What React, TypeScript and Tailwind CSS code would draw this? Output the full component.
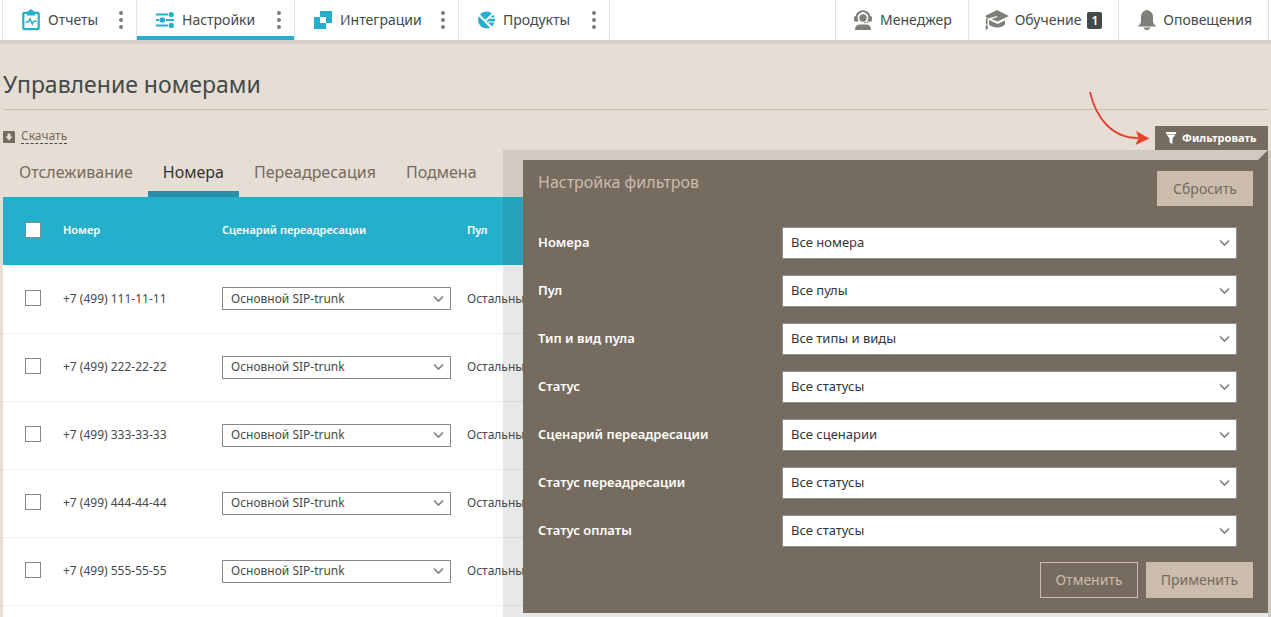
import type { ReactNode } from 'react';
import clsx from 'clsx';

function ReportsIcon() {
  return (
    <svg width="18" height="22" viewBox="0 0 18 22" className="shrink-0">
      <rect x="1.3" y="3.8" width="15.4" height="16.4" rx="1" fill="#fff" stroke="#24b0cd" strokeWidth="2.2" />
      <path d="M5 6.5V3.2Q5 2.2 6 2.2H6.8Q7.2 0.3 9 0.3T11.2 2.2H12Q13 2.2 13 3.2V6.5Z" fill="#24b0cd" />
      <path d="M3.5 13H6.3L8 10L10.3 15L11.7 12.3H14.5" fill="none" stroke="#24b0cd" strokeWidth="1.5" />
    </svg>
  );
}

function SettingsIcon() {
  return (
    <svg width="18" height="16" viewBox="0 0 18 16" className="shrink-0" fill="#24b0cd">
      <path d="M0 1.5H12V3.5H0ZM0 7H3V9H0ZM10 7H18V9H10ZM0 12.5H12V14.5H0Z" />
      <circle cx="15.3" cy="2.6" r="2.6" />
      <circle cx="6.3" cy="8" r="2.8" />
      <circle cx="15.3" cy="13.4" r="2.6" />
    </svg>
  );
}

function IntegrationsIcon() {
  return (
    <svg width="18" height="18" viewBox="0 0 18 18" className="shrink-0" fill="#24b0cd">
      <path d="M6 0H18V12H12V6H6Z" />
      <path d="M0 6H6V12H12V18H0Z" />
    </svg>
  );
}

function ProductsIcon() {
  return (
    <svg width="17" height="18" viewBox="0 0 17 18" className="shrink-0">
      <circle cx="8.5" cy="9" r="8.5" fill="#24b0cd" />
      <path d="M0 3L14.5 17.5" stroke="#fff" strokeWidth="2.2" />
      <path d="M7.5 10L15.5 2" stroke="#fff" strokeWidth="1.8" />
      <path d="M10 7.2H17M10 11H17" stroke="#fff" strokeWidth="1.2" />
    </svg>
  );
}

function ManagerIcon() {
  return (
    <svg width="18" height="20" viewBox="0 0 18 20" className="shrink-0" fill="#7d7f79">
      <path d="M3.7 11.5A6.5 6.5 0 1 1 14.3 11.5" fill="none" stroke="#7d7f79" strokeWidth="2.2" />
      <rect x="0" y="6" width="3.6" height="5.5" rx="1.5" />
      <rect x="14.4" y="6" width="3.6" height="5.5" rx="1.5" />
      <circle cx="9" cy="8" r="3.7" />
      <path d="M14.5 11.5Q12.5 13 10 12.8" fill="none" stroke="#7d7f79" strokeWidth="1" />
      <path d="M1 20Q1 14.5 6 14.5H12Q17 14.5 17 20Z" />
    </svg>
  );
}

function TrainingIcon() {
  return (
    <svg width="24" height="20" viewBox="0 0 24 20" className="shrink-0" fill="#7d7f79">
      <path d="M12 0L24 6L12.5 11.5L6.5 9L12.5 7L12 6L3 8.5L0 6Z" />
      <path d="M4 10L12.5 14L20 10.5V14.5Q17 17.5 12.5 17.5Q7 17.5 4 14.5Z" />
      <path d="M1 8L2.6 8.5V14.5H1ZM0.6 15.5H2.8V19L0.6 20Z" />
    </svg>
  );
}

function BellIcon() {
  return (
    <svg width="20" height="20" viewBox="0 0 20 20" className="shrink-0" fill="#7d7f79">
      <path d="M10 0Q12 0 12.3 1Q16 2.3 16 7V11.5Q16.2 14.5 20 16.5H0Q3.8 14.5 4 11.5V7Q4 2.3 7.7 1Q8 0 10 0Z" />
      <path d="M6.5 17.5H13.5Q12.5 20 10 20T6.5 17.5Z" />
    </svg>
  );
}

const menu = [
  { label: 'Отчеты', icon: <ReportsIcon />, width: 'w-[134px]' },
  { label: 'Настройки', icon: <SettingsIcon />, width: 'w-[158px]', active: true },
  { label: 'Интеграции', icon: <IntegrationsIcon />, width: 'w-[164px]' },
  { label: 'Продукты', icon: <ProductsIcon />, width: 'w-[151px]' },
];

const tabs = ['Отслеживание', 'Номера', 'Переадресация', 'Подмена'];

const numbers = [
  '+7 (499) 111-11-11',
  '+7 (499) 222-22-22',
  '+7 (499) 333-33-33',
  '+7 (499) 444-44-44',
  '+7 (499) 555-55-55',
];

const filters = [
  { id: 'numbers', label: 'Номера', value: 'Все номера' },
  { id: 'pool', label: 'Пул', value: 'Все пулы' },
  { id: 'pool-type', label: 'Тип и вид пула', value: 'Все типы и виды' },
  { id: 'status', label: 'Статус', value: 'Все статусы' },
  { id: 'scenario', label: 'Сценарий переадресации', value: 'Все сценарии' },
  { id: 'forward-status', label: 'Статус переадресации', value: 'Все статусы' },
  { id: 'payment-status', label: 'Статус оплаты', value: 'Все статусы' },
];

function Chevron() {
  return (
    <svg
      width="11"
      height="8"
      viewBox="0 0 11 8"
      className="pointer-events-none absolute top-1/2 right-[7px] -translate-y-1/2"
    >
      <path d="M1 1.5L5.5 6L10 1.5" fill="none" stroke="#7d7f80" strokeWidth="1.7" />
    </svg>
  );
}

function Checkbox({ label }: { label: string }) {
  return (
    <input
      type="checkbox"
      aria-label={label}
      className="block h-4 w-4 appearance-none border border-[#85898a] bg-white"
    />
  );
}

function MenuLink({ icon, className, children }: { icon: ReactNode; className: string; children: ReactNode }) {
  return (
    <a href="#" className={clsx('flex h-full items-center border-l border-[#e3e3e3] pr-4', className)}>
      {icon}
      {children}
    </a>
  );
}

function FilterPanel() {
  return (
    <div className="absolute top-[150px] right-0 bottom-0 left-[503px] bg-[#434a4b]/13 pt-[10px] pr-[3px] pl-5">
      <svg width="10" height="10" viewBox="0 0 10 10" className="absolute top-0 right-[3px]">
        <path d="M0 10L10 0V10Z" fill="#756b5e" />
      </svg>
      <form className="bg-[#756b5e] p-[15px] pt-[11px]">
        <div className="flex items-start justify-between">
          <h2 className="text-base leading-[22px] text-[#cbbcab]">Настройка фильтров</h2>
          <button type="reset" className="h-[35px] w-24 bg-[#cbbcab] text-sm text-[#756b5e]">
            Сбросить
          </button>
        </div>
        <div className="mt-[21px] flex flex-col gap-4 pr-4">
          {filters.map(({ id, label, value }) => (
            <div key={id} className="flex items-center">
              <label htmlFor={id} className="w-[244px] shrink-0 text-[13px] font-semibold text-white">
                {label}
              </label>
              <div className="relative flex-1">
                <select
                  id={id}
                  className="block h-8 w-full appearance-none border border-[#8a9092] bg-white px-2 text-[13px] text-[#333638]"
                >
                  <option>{value}</option>
                </select>
                <Chevron />
              </div>
            </div>
          ))}
        </div>
        <div className="mt-[15px] flex justify-end gap-2 text-sm">
          <button type="button" className="h-9 w-[98px] border border-[#cbbcab] text-[#cbbcab]">
            Отменить
          </button>
          <button type="submit" className="h-9 w-[107px] bg-[#cbbcab] text-[#756b5e]">
            Применить
          </button>
        </div>
      </form>
    </div>
  );
}

export default function App() {
  return (
    <div className="relative flex min-h-screen flex-col overflow-hidden bg-[#e6ddd4] font-['Noto_Sans',sans-serif] text-[#434a4b]">
      {/* Top menu */}
      <header className="flex h-11 justify-between border-b-4 border-[#d8cfc6] bg-white px-[2px] text-sm">
        <nav className="flex border-r border-[#e3e3e3]">
          {menu.map(({ label, icon, width, active }) => (
            <div
              key={label}
              className={clsx(
                'flex items-center justify-between border-l border-[#e3e3e3] pr-[13px] pl-[19px]',
                width,
                active && 'shadow-[inset_0_-4px_#24b0cd]',
              )}
            >
              <a href="#" className="flex items-center gap-2">
                {icon}
                {label}
              </a>
              <button type="button" aria-label={`${label}: меню`}>
                <svg width="4" height="18" viewBox="0 0 4 18" fill="#7d7b76">
                  <circle cx="2" cy="2" r="2" />
                  <circle cx="2" cy="9" r="2" />
                  <circle cx="2" cy="16" r="2" />
                </svg>
              </button>
            </div>
          ))}
        </nav>
        <nav className="flex border-r border-[#e3e3e3]">
          <MenuLink icon={<ManagerIcon />} className="gap-2 pl-[18px]">
            Менеджер
          </MenuLink>
          <MenuLink icon={<TrainingIcon />} className="gap-[6px] pl-4">
            Обучение
            <span className="rounded-xs bg-[#434a4b] px-1 text-xs leading-[17px] font-semibold text-white">1</span>
          </MenuLink>
          <MenuLink icon={<BellIcon />} className="gap-[6px] pl-[18px]">
            Оповещения
          </MenuLink>
        </nav>
      </header>

      <main className="flex flex-1 flex-col px-[3px]">
        <h1 className="border-b border-[#c9bfa9] pt-[25px] pb-[9px] text-[23px] leading-[31px]">
          Управление номерами
        </h1>

        <div className="mt-4 flex h-6 items-end justify-between">
          <a href="#" className="flex items-center gap-[6px] pb-[6px] text-xs text-[#756b5e]">
            <svg width="12" height="12" viewBox="0 0 12 12">
              <rect width="12" height="12" rx="1" fill="#756b5e" />
              <path d="M4.5 2.5H7.5V5.5H9.5L6 9.5L2.5 5.5H4.5Z" fill="#e6ddd4" />
            </svg>
            <span className="border-b border-dashed border-[#434a4b] leading-[14px]">Скачать</span>
          </a>
          <button
            type="button"
            className="flex h-6 w-[113px] items-center gap-[6px] bg-[#756b5e] pl-[11px] text-[11px] font-bold text-white"
          >
            <svg width="10" height="12" viewBox="0 0 10 12" fill="#fff" className="shrink-0">
              <path d="M0 0H10V2H0ZM0.5 2.5H9.5L6.5 6.5V12L3.5 10.5V6.5Z" />
            </svg>
            Фильтровать
          </button>
        </div>

        {/* Tabs */}
        <div role="tablist" className="flex pl-px text-base">
          {tabs.map((tab) => (
            <button
              key={tab}
              type="button"
              role="tab"
              aria-selected={tab === 'Номера'}
              className={clsx(
                'h-[47px] border-b-[6px] px-[15px] pt-[2px]',
                tab === 'Номера' ? 'border-[#2a90a7] text-[#333]' : 'border-transparent text-[#756b5e]',
              )}
            >
              {tab}
            </button>
          ))}
        </div>

        <div className="flex-1 bg-white">
          <table className="w-full table-fixed text-left text-xs">
            <colgroup>
              <col className="w-[60px]" />
              <col className="w-[159px]" />
              <col className="w-[245px]" />
              <col />
            </colgroup>
            <thead>
              <tr className="h-[68px] bg-[#24b0cd] text-[11px] text-white">
                <th className="pb-[2px] pl-[22px]">
                  <Checkbox label="Выбрать все" />
                </th>
                <th className="pb-[2px] font-semibold">Номер</th>
                <th className="pb-[2px] font-semibold">Сценарий переадресации</th>
                <th className="pb-[2px] font-semibold">Пул</th>
              </tr>
            </thead>
            <tbody>
              {numbers.map((number) => (
                <tr key={number} className="h-[68px] border-b border-[#eeeeec]">
                  <td className="pb-[2px] pl-[22px]">
                    <Checkbox label={number} />
                  </td>
                  <td>{number}</td>
                  <td className="pr-4">
                    <div className="relative">
                      <select
                        aria-label={`Сценарий для ${number}`}
                        className="block h-[23px] w-full appearance-none border border-[#85898a] bg-white px-2"
                      >
                        <option>Основной SIP-trunk</option>
                      </select>
                      <Chevron />
                    </div>
                  </td>
                  <td>Остальные</td>
                </tr>
              ))}
            </tbody>
          </table>
        </div>
      </main>

      <FilterPanel />

      {/* Pointer to the filter button */}
      <svg width="64" height="58" viewBox="0 0 64 58" className="absolute top-[90px] right-[120px]">
        <path d="M3 2C9 28 25 48 51 48" fill="none" stroke="#e8402f" strokeWidth="1.8" />
        <path d="M62.5 48.5L49 41L51.5 48L48.5 55Z" fill="#e8402f" />
      </svg>
    </div>
  );
}
